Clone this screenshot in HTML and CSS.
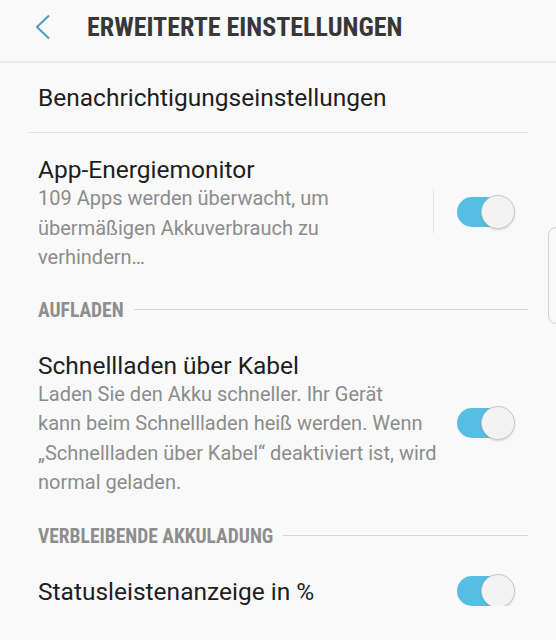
FILE: index.html
```html
<!DOCTYPE html>
<html lang="de">
<head>
  <meta charset="UTF-8">
  <meta name="viewport" content="width=device-width, initial-scale=1.0">
  <title>Erweiterte Einstellungen</title>
  <link rel="stylesheet" href="styles.css">
</head>
<body>
  <div class="header">
    <svg class="back" width="16" height="26" viewBox="0 0 16 26">
      <polyline points="14,1.5 2,13 14,24.5" fill="none" stroke="#4a9fc6" stroke-width="2"/>
    </svg>
    <h1>ERWEITERTE EINSTELLUNGEN</h1>
  </div>

  <div class="list">
    <div class="item first">
      <div class="title">Benachrichtigungseinstellungen</div>
    </div>

    <div class="item app">
      <div class="text">
        <div class="title">App-Energiemonitor</div>
        <div class="sub">109 Apps werden überwacht, um<br>übermäßigen Akkuverbrauch zu<br>verhindern…</div>
      </div>
      <div class="sep"></div>
      <span class="switch on"></span>
    </div>

    <div class="section"><span>AUFLADEN</span></div>

    <div class="item fast">
      <div class="text">
        <div class="title">Schnellladen über Kabel</div>
        <div class="sub">Laden Sie den Akku schneller. Ihr Gerät<br>kann beim Schnellladen heiß werden. Wenn<br>„Schnellladen über Kabel“ deaktiviert ist, wird<br>normal geladen.</div>
      </div>
      <span class="switch on"></span>
    </div>

    <div class="section second"><span>VERBLEIBENDE AKKULADUNG</span></div>

    <div class="item status">
      <div class="text">
        <div class="title">Statusleistenanzeige in %</div>
      </div>
      <span class="switch on"></span>
    </div>
  </div>

  <div class="edge"></div>
</body>
</html>
```

FILE: styles.css
```css
body {
  margin: 0;
  background-color: #f9f9f9;
  font-family: Roboto, "Noto Sans", sans-serif;
  color: #1e1e1e;
  overflow: hidden;
}
.header {
  display: flex;
  align-items: center;
  height: 54px;
  padding-bottom: 7px;
  border-bottom: 2px solid #e9e9e9;
}
.back {
  margin-left: 35px;
  margin-right: 36px;
}
h1 {
  margin: 0;
  font-family: "Roboto Condensed", "Liberation Sans Narrow", "DejaVu Sans Condensed", sans-serif;
  font-size: 26px;
  font-weight: bold;
  color: #373737;
}
.list {
  margin: 0 28px;
}
.item {
  display: flex;
  align-items: center;
  padding: 0 13px 0 10px;
}
.title {
  font-size: 24.5px;
  line-height: 28px;
  white-space: nowrap;
}
.text {
  flex: 1;
}
.sub {
  font-size: 20px;
  line-height: 29.5px;
  color: #8c8c8c;
  white-space: nowrap;
}
.item.first {
  padding-top: 20px;
  padding-bottom: 19px;
  border-bottom: 1px solid #e3e3e3;
}
.item.first .title {
  line-height: 30px;
}
.item.app {
  padding-top: 23px;
  padding-bottom: 26px;
}
.item.fast {
  padding-top: 29px;
  padding-bottom: 27px;
}
.item.status {
  padding-top: 29px;
}
.sep {
  width: 1px;
  height: 44px;
  background-color: #e3e3e3;
  margin-right: 23px;
  margin-bottom: 6px;
}
.section {
  display: flex;
  align-items: center;
  height: 24px;
  padding-left: 10px;
  font-family: "Roboto Condensed", "Liberation Sans Narrow", "DejaVu Sans Condensed", sans-serif;
  font-size: 19.5px;
  font-weight: bold;
  color: #8e8e8e;
}
.section::after {
  content: "";
  flex: 1;
  height: 1px;
  margin-left: 10px;
  margin-bottom: 3px;
  background-color: #d6d6d6;
}
.switch {
  position: relative;
  display: block;
  flex: none;
  width: 58px;
  height: 34px;
}
.switch::before {
  content: "";
  position: absolute;
  left: 0;
  right: 3px;
  top: 2px;
  bottom: 2px;
  border-radius: 15px;
  background-color: #56bee3;
}
.switch::after {
  content: "";
  position: absolute;
  right: 0;
  top: 0;
  width: 32px;
  height: 32px;
  border-radius: 50%;
  background-color: #f3f3f3;
  border: 1px solid #c9c9c9;
  box-shadow: 0 1px 2px rgba(0, 0, 0, 0.15);
}
.item.app .switch {
  margin-bottom: 4px;
}
.item.fast .switch {
  margin-bottom: 3px;
}
.item.status .switch {
  margin-top: -4px;
  margin-bottom: -2px;
}
.edge {
  position: fixed;
  top: 227px;
  right: -10px;
  width: 16px;
  height: 95px;
  border: 1px solid #d2d2d2;
  border-radius: 8px;
}
```
